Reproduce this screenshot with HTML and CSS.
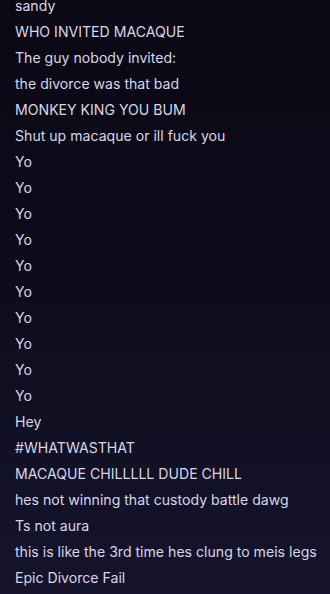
FILE: index.html
```html
<!DOCTYPE html>
<html>
<head>
<meta charset="utf-8">
<link rel="stylesheet" href="styles.css">
</head>
<body>
<div class="chat">
  <div class="msg">sandy</div>
  <div class="msg">WHO INVITED MACAQUE</div>
  <div class="msg">The guy nobody invited:</div>
  <div class="msg">the divorce was that bad</div>
  <div class="msg">MONKEY KING YOU BUM</div>
  <div class="msg">Shut up macaque or ill fuck you</div>
  <div class="msg">Yo</div>
  <div class="msg">Yo</div>
  <div class="msg">Yo</div>
  <div class="msg">Yo</div>
  <div class="msg">Yo</div>
  <div class="msg">Yo</div>
  <div class="msg">Yo</div>
  <div class="msg">Yo</div>
  <div class="msg">Yo</div>
  <div class="msg">Yo</div>
  <div class="msg">Hey</div>
  <div class="msg">#WHATWASTHAT</div>
  <div class="msg">MACAQUE CHILLLLL DUDE CHILL</div>
  <div class="msg">hes not winning that custody battle dawg</div>
  <div class="msg">Ts not aura</div>
  <div class="msg">this is like the 3rd time hes clung to meis legs</div>
  <div class="msg">Epic Divorce Fail</div>
</div>
</body>
</html>
```
FILE: styles.css
```css
html, body {
  margin: 0;
  padding: 0;
  height: 100%;
  overflow: hidden;
}
body {
  background: linear-gradient(180deg, #0a0813 0%, #0e0c1c 50%, #16142c 100%);
  font-family: Inter, "Noto Sans", sans-serif;
  color: #d8d6ea;
}
.chat {
  display: flex;
  flex-direction: column;
  padding: 0 15px;
  margin-top: -7px;
}
.msg {
  font-size: 14.1px;
  line-height: 26px;
  white-space: nowrap;
}
```
